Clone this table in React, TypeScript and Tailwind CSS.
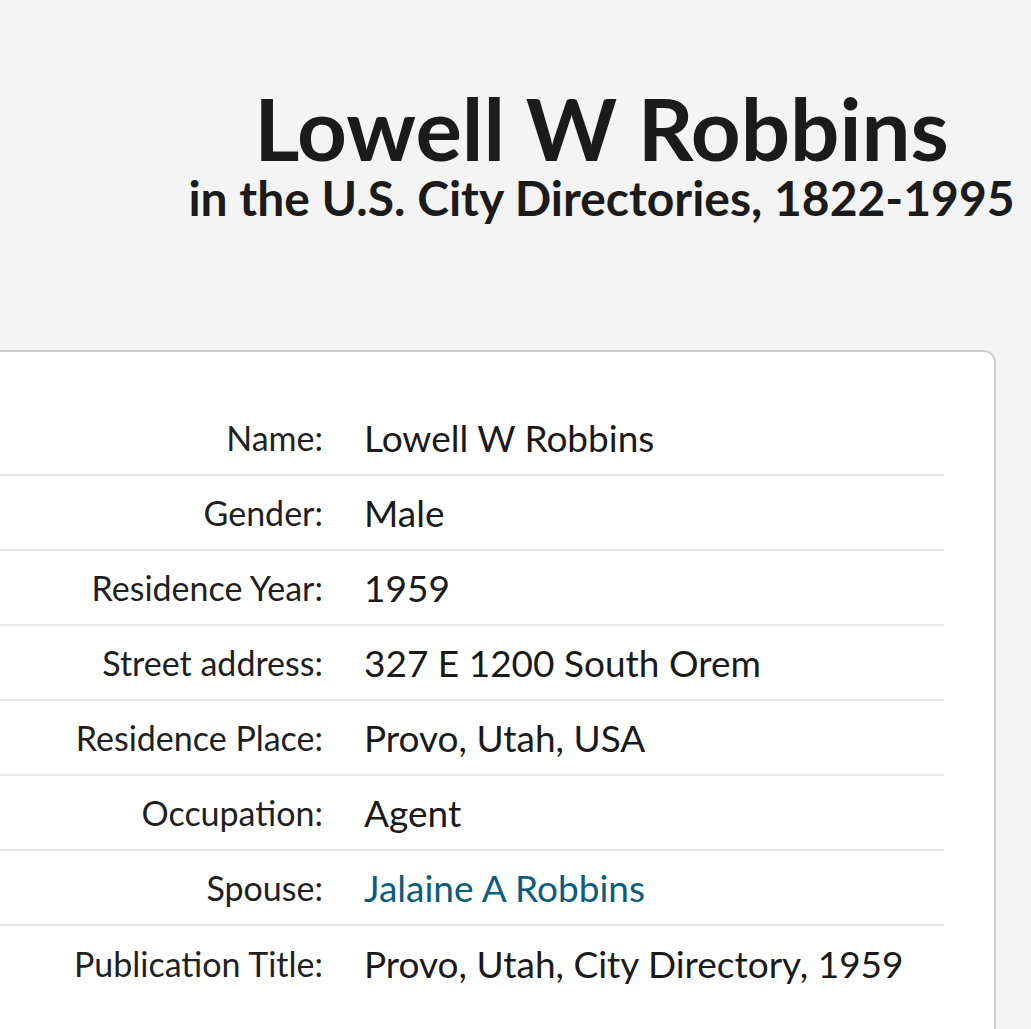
import React from 'react';

interface Fact {
  label: string;
  value: string;
  link?: boolean;
}

const facts: Fact[] = [
  { label: 'Name:', value: 'Lowell W Robbins' },
  { label: 'Gender:', value: 'Male' },
  { label: 'Residence Year:', value: '1959' },
  { label: 'Street address:', value: '327 E 1200 South Orem' },
  { label: 'Residence Place:', value: 'Provo, Utah, USA' },
  { label: 'Occupation:', value: 'Agent' },
  { label: 'Spouse:', value: 'Jalaine A Robbins', link: true },
  { label: 'Publication Title:', value: 'Provo, Utah, City Directory, 1959' },
];

const FactRow: React.FC<{ fact: Fact; last: boolean }> = ({ fact, last }) => (
  <div
    className={`flex items-center h-[75px] ${last ? '' : 'border-b-2 border-[#e6e6e6]'}`}
  >
    <div className="w-[323px] shrink-0 text-right text-[34px] text-[#1f1f1f]">{fact.label}</div>
    <div
      className={`pl-[41px] text-[37px] ${fact.link ? 'text-[#0c5c7c]' : 'text-[#1a1a1a]'}`}
    >
      {fact.value}
    </div>
  </div>
);

export default function App() {
  return (
    <div
      className="min-h-screen bg-[#f4f4f4] overflow-hidden"
      style={{ fontFamily: 'Lato, "Noto Sans", sans-serif' }}
    >
      <header className="pl-[172px] pt-[83px] text-center text-[#1b1b1b]">
        <h1 className="text-[87px] font-bold leading-[90px]">Lowell W Robbins</h1>
        <h2 className="text-[48px] font-bold leading-[50px]">in the U.S. City Directories, 1822-1995</h2>
      </header>

      <section className="mt-[127px] w-[996px] bg-white border-2 border-l-0 border-[#cfcfcf] rounded-tr-[12px] pt-[49px] pr-[50px]">
        {facts.map((f, i) => (
          <FactRow key={f.label} fact={f} last={i === facts.length - 1} />
        ))}
        <div className="h-[80px]" />
      </section>
    </div>
  );
}
